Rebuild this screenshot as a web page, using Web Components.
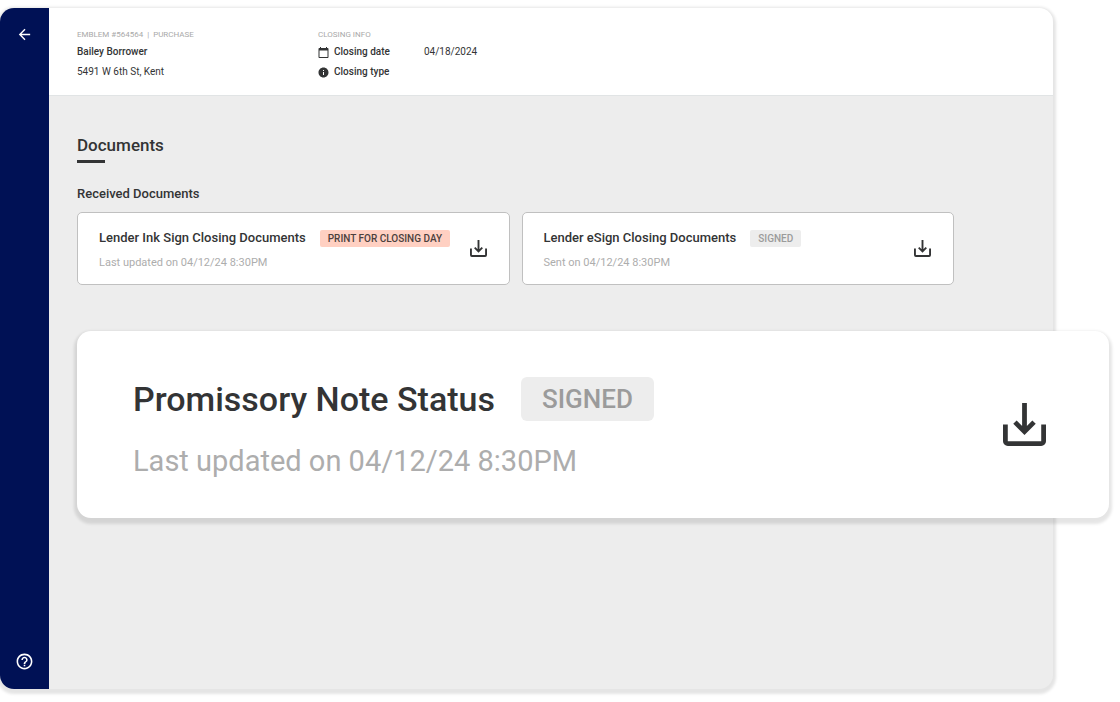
<!DOCTYPE html>
<html lang="en">
<head>
<meta charset="utf-8">
<meta name="viewport" content="width=device-width, initial-scale=1">
<title>Documents</title>
<style>
  body {
    margin: 0;
    background: #fff;
    color: #333435;
    font-family: Roboto, "Liberation Sans", sans-serif;
  }
</style>
</head>
<body>

<app-shell>
  <side-bar slot="nav"></side-bar>
  <closing-header
    slot="header"
    file="EMBLEM #564564 &nbsp;|&nbsp; PURCHASE"
    borrower="Bailey Borrower"
    address="5491 W 6th St, Kent"
    date="04/18/2024"
  ></closing-header>
  <page-title>Documents</page-title>
  <document-list heading="Received Documents">
    <document-card heading="Lender Ink Sign Closing Documents" note="Last updated on 04/12/24 8:30PM">
      <status-badge slot="status" type="action">PRINT FOR CLOSING DAY</status-badge>
    </document-card>
    <document-card heading="Lender eSign Closing Documents" note="Sent on 04/12/24 8:30PM">
      <status-badge slot="status">SIGNED</status-badge>
    </document-card>
  </document-list>
  <document-card size="large" heading="Promissory Note Status" note="Last updated on 04/12/24 8:30PM">
    <status-badge slot="status" size="large">SIGNED</status-badge>
  </document-card>
</app-shell>

<script>
class AppShell extends HTMLElement {
  constructor() {
    super();
    this.attachShadow({ mode: "open" });
  }

  connectedCallback() {
    this.shadowRoot.innerHTML = `
      <style>
        :host {
          display: flex;
          box-sizing: border-box;
          min-height: 100vh;
          padding: 8px 67px 13px 0;
        }
        .frame {
          display: flex;
          flex: 1;
          min-width: 0;
          border-radius: 14px;
          background: #ededed;
          box-shadow: 0 2px 3px 3px #e5e5e5;
        }
        .page {
          display: flex;
          flex-direction: column;
          flex: 1;
          min-width: 0;
        }
        main {
          padding: 39px 99px 40px 28px;
        }
        ::slotted(document-card) {
          margin: 46px -155px 0 0;
        }
      </style>
      <div class="frame">
        <slot name="nav"></slot>
        <div class="page">
          <slot name="header"></slot>
          <main><slot></slot></main>
        </div>
      </div>
    `;
  }
}

class SideBar extends HTMLElement {
  constructor() {
    super();
    this.attachShadow({ mode: "open" });
  }

  connectedCallback() {
    this.shadowRoot.innerHTML = `
      <style>
        :host {
          display: flex;
          width: 49px;
          flex: none;
          background: #001155;
          border-radius: 14px 0 0 14px;
        }
        nav {
          display: flex;
          flex: 1;
          flex-direction: column;
          align-items: center;
          justify-content: space-between;
          padding: 18px 0;
        }
        button {
          display: block;
          padding: 0;
          border: 0;
          background: none;
          color: #fff;
          cursor: pointer;
        }
        svg { display: block; }
      </style>
      <nav aria-label="Main">
        <button type="button" aria-label="Back">
          <svg width="17" height="17" viewBox="0 0 24 24" fill="currentColor">
            <path d="M20 11H7.83l5.59-5.59L12 4l-8 8 8 8 1.41-1.41L7.83 13H20v-2z"/>
          </svg>
        </button>
        <button type="button" aria-label="Help">
          <svg width="19" height="19" viewBox="0 0 24 24" fill="currentColor">
            <path d="M11 18h2v-2h-2v2zm1-16C6.48 2 2 6.48 2 12s4.48 10 10 10 10-4.48 10-10S17.52 2 12 2zm0 18c-4.41 0-8-3.59-8-8s3.59-8 8-8 8 3.59 8 8-3.59 8-8 8zm0-14c-2.21 0-4 1.79-4 4h2c0-1.1.9-2 2-2s2 .9 2 2c0 2-3 1.75-3 5h2c0-2.25 3-2.5 3-5 0-2.21-1.79-4-4-4z"/>
          </svg>
        </button>
      </nav>
    `;
  }
}

class ClosingHeader extends HTMLElement {
  constructor() {
    super();
    this.attachShadow({ mode: "open" });
  }

  connectedCallback() {
    const get = (name) => this.getAttribute(name) || "";

    this.shadowRoot.innerHTML = `
      <style>
        :host {
          display: block;
          background: #fff;
          border-bottom: 1px solid #e1e4e5;
          border-radius: 0 14px 0 0;
        }
        header {
          display: flex;
          padding: 20px 28px 13px;
          font-size: 10px;
          line-height: 20px;
        }
        .file { width: 241px; }
        .label {
          color: #a9a9a9;
          font-size: 8px;
          line-height: 14px;
        }
        .name, dt { font-weight: 500; }
        .label, .name, .address, dl { margin: 0; }
        .row { display: flex; }
        dt {
          display: flex;
          align-items: center;
          gap: 5px;
          width: 106px;
        }
        dd { margin: 0; }
      </style>
      <header>
        <div class="file">
          <p class="label">${get("file")}</p>
          <p class="name">${get("borrower")}</p>
          <p class="address">${get("address")}</p>
        </div>
        <div>
          <p class="label">CLOSING INFO</p>
          <dl>
            <div class="row">
              <dt>
                <svg width="11" height="11" viewBox="1 1 22 22" fill="currentColor" aria-hidden="true">
                  <path d="M20 3h-1V1h-2v2H7V1H5v2H4c-1.1 0-2 .9-2 2v16c0 1.1.9 2 2 2h16c1.1 0 2-.9 2-2V5c0-1.1-.9-2-2-2zm0 18H4V8h16v13z"/>
                </svg>
                Closing date
              </dt>
              <dd>${get("date")}</dd>
            </div>
            <div class="row">
              <dt>
                <svg width="11" height="11" viewBox="1 1 22 22" fill="currentColor" aria-hidden="true">
                  <path d="M12 2C6.48 2 2 6.48 2 12s4.48 10 10 10 10-4.48 10-10S17.52 2 12 2zm1 15h-2v-6h2v6zm0-8h-2V7h2v2z"/>
                </svg>
                Closing type
              </dt>
              <dd></dd>
            </div>
          </dl>
        </div>
      </header>
    `;
  }
}

class PageTitle extends HTMLElement {
  constructor() {
    super();
    this.attachShadow({ mode: "open" });
  }

  connectedCallback() {
    this.shadowRoot.innerHTML = `
      <style>
        :host { display: block; }
        h1 {
          margin: 0;
          font-size: 17px;
          font-weight: 500;
          line-height: 20px;
        }
        h1::after {
          content: "";
          display: block;
          width: 28px;
          height: 3px;
          margin-top: 5px;
          background: currentColor;
        }
      </style>
      <h1><slot></slot></h1>
    `;
  }
}

class DocumentList extends HTMLElement {
  constructor() {
    super();
    this.attachShadow({ mode: "open" });
  }

  connectedCallback() {
    this.shadowRoot.innerHTML = `
      <style>
        :host {
          display: block;
          margin-top: 23px;
        }
        h2 {
          margin: 0 0 10px;
          font-size: 13px;
          font-weight: 500;
          line-height: 16px;
        }
        .cards {
          display: grid;
          grid-template-columns: 1fr 1fr;
          gap: 12px;
        }
      </style>
      <section>
        <h2>${this.getAttribute("heading")}</h2>
        <div class="cards"><slot></slot></div>
      </section>
    `;
  }
}

class DocumentCard extends HTMLElement {
  constructor() {
    super();
    this.attachShadow({ mode: "open" });
  }

  connectedCallback() {
    const heading = this.getAttribute("heading");

    this.shadowRoot.innerHTML = `
      <style>
        :host {
          display: block;
          border: 1px solid #c0c0c0;
          border-radius: 5px;
          background: #fff;
        }
        article {
          display: flex;
          align-items: center;
          justify-content: space-between;
          padding: 15px 22px 15px 21px;
        }
        .title {
          display: flex;
          align-items: center;
          gap: 14px;
          white-space: nowrap;
        }
        h3 {
          margin: 0;
          font-size: 13px;
          font-weight: 500;
          line-height: 20px;
        }
        p {
          margin: 9px 0 0;
          color: #adadad;
          font-size: 11px;
          line-height: 12px;
        }
        button {
          display: block;
          padding: 0;
          border: 0;
          background: none;
          color: inherit;
          cursor: pointer;
        }
        svg {
          display: block;
          width: 17px;
          height: 17px;
        }

        :host([size="large"]) {
          border: 0;
          border-radius: 14px;
          box-shadow: 0 3px 3px 3px rgba(0, 0, 0, 0.1);
        }
        :host([size="large"]) article { padding: 46px 63px 46px 56px; }
        :host([size="large"]) .title { gap: 26px; }
        :host([size="large"]) h3 {
          font-size: 34px;
          line-height: 42px;
        }
        :host([size="large"]) p {
          margin-top: 29px;
          font-size: 29px;
          line-height: 22px;
        }
        :host([size="large"]) svg {
          width: 43px;
          height: 43px;
        }
      </style>
      <article>
        <div>
          <div class="title">
            <h3>${heading}</h3>
            <slot name="status"></slot>
          </div>
          <p>${this.getAttribute("note")}</p>
        </div>
        <button type="button" aria-label="Download ${heading}">
          <svg viewBox="0 0 18 18" fill="none" stroke="currentColor" stroke-width="2">
            <path d="M1 9v7a1 1 0 0 0 1 1h14a1 1 0 0 0 1-1V9M9 0v12M5 8l4 4 4-4"/>
          </svg>
        </button>
      </article>
    `;
  }
}

class StatusBadge extends HTMLElement {
  constructor() {
    super();
    this.attachShadow({ mode: "open" });
  }

  connectedCallback() {
    this.shadowRoot.innerHTML = `
      <style>
        :host {
          display: block;
          padding: 0 8px;
          border-radius: 2px;
          background: #ededed;
          color: #9b9b9b;
          font-size: 10px;
          font-weight: 500;
          line-height: 17px;
        }
        :host([type="action"]) {
          background: #ffd0c2;
          color: #4b403d;
        }
        :host([size="large"]) {
          padding: 0 21px;
          border-radius: 6px;
          font-size: 26px;
          line-height: 44px;
        }
      </style>
      <slot></slot>
    `;
  }
}

customElements.define("app-shell", AppShell);
customElements.define("side-bar", SideBar);
customElements.define("closing-header", ClosingHeader);
customElements.define("page-title", PageTitle);
customElements.define("document-list", DocumentList);
customElements.define("document-card", DocumentCard);
customElements.define("status-badge", StatusBadge);
</script>
</body>
</html>
